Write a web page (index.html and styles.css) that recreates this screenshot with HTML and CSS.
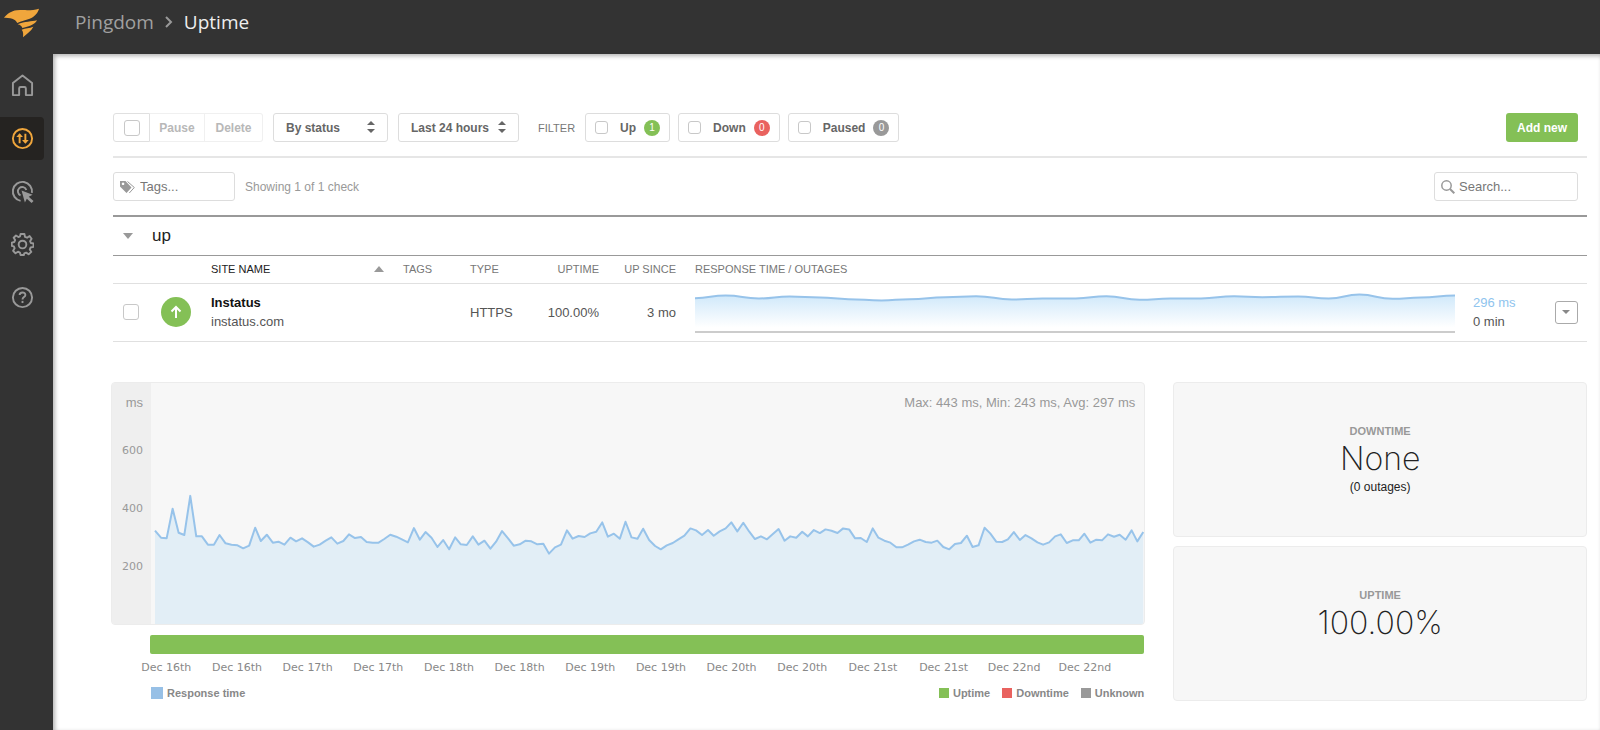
FILE: index.html
```html
<!DOCTYPE html>
<html lang="en">
<head>
    <meta charset="UTF-8">
    <meta name="viewport" content="width=device-width, initial-scale=1.0">
    <title>Pingdom - Uptime</title>
    <link rel="stylesheet" href="styles.css">
</head>
<body>
    <header class="topbar">
        <a href="#" class="logo" aria-label="Home">
            <svg width="44" height="44" viewBox="0 0 132 132" fill="#f0a63c">
                <path d="M12 53C22 42 33 33 50 31C76 29 96 33 117 26C114 38 104 50 89 56C77 61 63 62 52 69C49 61 38 52 12 53Z"/>
                <path d="M53 73C75 63 94 66 111 61C106 72 92 79 67 84C66 79 61 75 53 73Z"/>
                <path d="M65 89C77 84 88 85 100 80C94 93 81 101 69 112C70 102 70 95 65 89Z"/>
            </svg>
        </a>
        <nav class="breadcrumb">
            <a href="#">Pingdom</a>
            <svg width="8" height="12" viewBox="0 0 8 12" fill="none" stroke="#999" stroke-width="2"><path d="M1 1l5 5-5 5"/></svg>
            <a href="#" class="current">Uptime</a>
        </nav>
    </header>

    <div class="layout">
        <nav class="sidebar">
            <a href="#" aria-label="Dashboard">
                <svg width="24" height="24" viewBox="0 0 24 24" fill="none" stroke="currentColor" stroke-width="2" stroke-linejoin="round"><path d="M2 9.500L12 1.500l10 8V22h-6.500v-7q0-1.500-1.500-1.500h-4q-1.500 0-1.500 1.500v7H2z"/></svg>
            </a>
            <a href="#" class="active" aria-label="Uptime">
                <svg width="24" height="24" viewBox="0 0 24 24" fill="none" stroke="currentColor" stroke-width="2"><circle cx="12" cy="12" r="10"/><path d="M9 17V8M15 7v9"/><path fill="currentColor" stroke="none" d="M5.500 10.500l3.500-4 3.500 4zM11.500 13.500l3.500 4 3.500-4z"/></svg>
            </a>
            <a href="#" aria-label="Transactions">
                <svg width="24" height="24" viewBox="0 0 24 24" fill="none" stroke="currentColor" stroke-width="2"><path d="M10 21.800A10 10 0 1 1 21.800 13.500"/><path d="M10 16A4.500 4.500 0 1 1 16 10.500"/><path fill="currentColor" stroke="none" d="M11 11l11.500 4.500-4 2 5 4.500-2 2-5-4.500-2 4z"/></svg>
            </a>
            <a href="#" aria-label="Settings">
                <svg width="24" height="24" viewBox="0 0 24 24" fill="none" stroke="currentColor" stroke-width="2" stroke-linejoin="round"><circle cx="12" cy="12" r="4"/><path d="M10 1h4l.6 3 2.200.9L19.400 3.200 21.500 6l-1.600 2.500.9 2 2.700.5v3.500l-3 .6-.9 2 1.600 2.600-2.800 2.500-2.600-1.700-2 .8L13.500 23h-3.500l-.7-2.600-2-.9-2.600 1.700L2.200 18.500l1.600-2.500-.8-2L.8 13.500V10l2.600-.6.9-2L2.800 5 5.200 2.600l2.500 1.600 1.700-.7z"/></svg>
            </a>
            <a href="#" aria-label="Help">
                <svg width="24" height="24" viewBox="0 0 24 24" fill="none" stroke="currentColor" stroke-width="2"><circle cx="12" cy="12" r="10"/><path d="M9 9.500C9 5.800 15 5.800 15 9.300c0 2.200-3 2.300-3 4.700"/><path d="M12 15.500v2.300"/></svg>
            </a>
        </nav>

        <main class="content">
            <div class="toolbar">
                <div class="bulk">
                    <label class="bulk-check"><input type="checkbox" aria-label="Select all"></label>
                    <button type="button">Pause</button>
                    <button type="button">Delete</button>
                </div>
                <div class="select">
                    <select class="by-status" aria-label="Sort by"><option>By status</option></select>
                    <svg width="8" height="12" viewBox="0 0 8 12" fill="#666"><path d="M0 4l4-4 4 4zM0 8l4 4 4-4z"/></svg>
                </div>
                <div class="select">
                    <select class="period" aria-label="Period"><option>Last 24 hours</option></select>
                    <svg width="8" height="12" viewBox="0 0 8 12" fill="#666"><path d="M0 4l4-4 4 4zM0 8l4 4 4-4z"/></svg>
                </div>
                <span class="filter-title">FILTER</span>
                <div class="filters">
                    <label class="filter"><input type="checkbox">Up <span class="badge green">1</span></label>
                    <label class="filter"><input type="checkbox">Down <span class="badge red">0</span></label>
                    <label class="filter"><input type="checkbox">Paused <span class="badge gray">0</span></label>
                </div>
                <button type="button" class="add-new">Add new</button>
            </div>

            <div class="searchbar">
                <label class="field tags">
                    <svg width="16" height="14" viewBox="0 0 16 14" fill="#999"><path fill-rule="evenodd" d="M0 1h5.500l6 6.500L6.500 13 0 6.500zM3 2.500a1.300 1.300 0 1 0 .1 0z"/><path d="M7.500 1.500l6.800 6-5 5.500" fill="none" stroke="#999"/></svg>
                    <input type="text" placeholder="Tags..." aria-label="Tags">
                </label>
                <span class="showing">Showing 1 of 1 check</span>
                <label class="field search">
                    <svg width="14" height="14" viewBox="0 0 14 14" fill="none" stroke="#999"><circle cx="5.500" cy="5.500" r="4.700" stroke-width="1.500"/><path d="M9 9l4.300 4.300" stroke-width="2"/></svg>
                    <input type="text" placeholder="Search..." aria-label="Search">
                </label>
            </div>

            <section>
                <h2 class="group">
                    <svg width="10" height="6" viewBox="0 0 10 6" fill="#999"><path d="M0 0h10L5 6z"/></svg>
                    up
                </h2>
                <table class="checks">
                    <colgroup>
                        <col class="c-check"><col class="c-icon"><col class="c-name"><col class="c-tags"><col class="c-type"><col class="c-uptime"><col class="c-since"><col><col class="c-times"><col class="c-menu">
                    </colgroup>
                    <thead>
                        <tr>
                            <th></th>
                            <th></th>
                            <th class="sorted"><span>SITE NAME <svg width="10" height="6" viewBox="0 0 10 6" fill="#999"><path d="M0 6h10L5 0z"/></svg></span></th>
                            <th>TAGS</th>
                            <th>TYPE</th>
                            <th class="right">UPTIME</th>
                            <th class="right">UP SINCE</th>
                            <th class="response" colspan="3">RESPONSE TIME / OUTAGES</th>
                        </tr>
                    </thead>
                    <tbody>
                        <tr>
                            <td class="check"><input type="checkbox" aria-label="Select Instatus"></td>
                            <td>
                                <svg class="state" width="30" height="30" viewBox="0 0 30 30"><circle cx="15" cy="15" r="15" fill="#84c056"/><path d="M15 21V11M10.500 14.500L15 10l4.500 4.500" fill="none" stroke="#fff" stroke-width="2"/></svg>
                            </td>
                            <td><strong>Instatus</strong><br>instatus.com</td>
                            <td></td>
                            <td>HTTPS</td>
                            <td class="right">100.00%</td>
                            <td class="right">3 mo</td>
                            <td class="response">
                                <svg class="spark" viewBox="0 0 1487 123" preserveAspectRatio="none">
                                    <defs>
                                        <linearGradient id="fade" x1="0" y1="0" x2="0" y2="1">
                                            <stop offset="0" stop-color="#cfe8fa"/>
                                            <stop offset="0.900" stop-color="#fff"/>
                                        </linearGradient>
                                    </defs>
                                    <path id="sparkArea" fill="url(#fade)"/>
                                    <path id="sparkLine" class="line"/>
                                </svg>
                            </td>
                            <td class="times"><span>296 ms</span><br>0 min</td>
                            <td>
                                <button type="button" class="menu" aria-label="Actions"><svg width="8" height="4" viewBox="0 0 8 4" fill="#888"><path d="M0 0h8L4 4z"/></svg></button>
                            </td>
                        </tr>
                    </tbody>
                </table>
            </section>

            <section class="report">
                <div class="chart">
                    <div class="panel">
                        <div class="axis"><span>ms</span><span>600</span><span>400</span><span>200</span></div>
                        <div class="plot">
                            <p class="stats">Max: 443 ms, Min: 243 ms, Avg: 297 ms</p>
                            <svg viewBox="0 0 2985 726" preserveAspectRatio="none">
                                <path id="chartArea" fill="#e2eef6"/>
                                <path id="chartLine" class="line"/>
                            </svg>
                        </div>
                    </div>
                    <div class="uptime-bar"></div>
                    <div class="dates">
                        <span>Dec 16th</span><span>Dec 16th</span><span>Dec 17th</span><span>Dec 17th</span><span>Dec 18th</span><span>Dec 18th</span><span>Dec 19th</span><span>Dec 19th</span><span>Dec 20th</span><span>Dec 20th</span><span>Dec 21st</span><span>Dec 21st</span><span>Dec 22nd</span><span>Dec 22nd</span>
                    </div>
                    <div class="legend">
                        <span class="key blue">Response time</span>
                        <span class="key green first">Uptime</span>
                        <span class="key red">Downtime</span>
                        <span class="key gray">Unknown</span>
                    </div>
                </div>
                <div class="cards">
                    <div class="card">
                        <h3>DOWNTIME</h3>
                        <p class="value">None</p>
                        <p class="note">(0 outages)</p>
                    </div>
                    <div class="card">
                        <h3>UPTIME</h3>
                        <p class="value">100.00%</p>
                    </div>
                </div>
            </section>
        </main>
    </div>

    <script>
        // Response time samples, as depth in the plot
        const samples = [
            154, 175, 177, 88, 160, 167, 49, 171, 171, 196, 196, 167, 192, 196, 198, 207, 199, 145, 185, 166,
            190, 187, 196, 175, 186, 177, 189, 202, 196, 184, 174, 193, 185, 165, 176, 173, 188, 190, 190, 179,
            166, 172, 180, 189, 146, 181, 158, 175, 203, 182, 210, 174, 195, 197, 171, 196, 184, 208, 187, 155,
            177, 199, 195, 184, 186, 195, 193, 223, 204, 196, 153, 178, 170, 173, 162, 157, 129, 172, 163, 178,
            127, 174, 178, 148, 182, 200, 210, 198, 191, 180, 169, 147, 153, 167, 152, 169, 156, 147, 129, 156,
            130, 157, 179, 171, 180, 165, 149, 184, 171, 175, 157, 171, 152, 161, 150, 154, 161, 147, 150, 177,
            176, 188, 147, 175, 184, 190, 204, 204, 196, 186, 181, 188, 190, 184, 203, 210, 194, 191, 169, 203,
            198, 145, 162, 187, 188, 180, 158, 182, 167, 177, 189, 196, 189, 171, 165, 191, 183, 183, 163, 190,
            181, 183, 165, 172, 166, 181, 153, 186, 158
        ];
        const left = 12;
        const step = (2982 - left) / (samples.length - 1);
        const line = "M" + samples.map((y, i) => Math.round(left + i * step) + " " + (y + 291)).join("L");
        document.getElementById("chartLine").setAttribute("d", line);
        document.getElementById("chartArea").setAttribute("d", line + "V726H" + left + "Z");

        // Small graph in the table row
        const spark = [
            [0, 22], [60, 14], [125, 23], [185, 17], [245, 20], [300, 25], [365, 29], [420, 25], [490, 19],
            [550, 16], [620, 26], [680, 23], [745, 23], [805, 16], [870, 27], [930, 23], [990, 23], [1055, 16],
            [1110, 19], [1180, 17], [1240, 23], [1300, 11], [1365, 24], [1420, 20], [1487, 14]
        ];
        let curve = "M0 22";
        for (let i = 1; i < spark.length; i++) {
            let [x0, y0] = spark[i - 1];
            let [x1, y1] = spark[i];
            let mid = (x0 + x1) / 2;
            curve += `C${mid} ${y0} ${mid} ${y1} ${x1} ${y1}`;
        }
        document.getElementById("sparkLine").setAttribute("d", curve);
        document.getElementById("sparkArea").setAttribute("d", curve + "V123H0Z");
    </script>
</body>
</html>
```
FILE: styles.css
```css
* {
    box-sizing: border-box;
}
body {
    margin: 0;
    background: #333;
    color: #555;
    font-family: "Liberation Sans", Arial, sans-serif;
    font-size: 13px;
}
a {
    text-decoration: none;
}
p, h2, h3 {
    margin: 0;
}
button, select, input {
    font-family: inherit;
}

/* Top bar */
.topbar {
    display: flex;
    height: 54px;
    background: #333;
}
.logo {
    width: 53px;
}
.breadcrumb {
    display: flex;
    align-items: center;
    gap: 11px;
    height: 44px;
    padding-left: 22px;
    font-family: "Open Sans", sans-serif;
    font-size: 19px;
}
.breadcrumb a {
    color: #a0a0a0;
}
.breadcrumb .current {
    color: #eee;
}

/* Sidebar */
.layout {
    display: flex;
    min-height: calc(100vh - 54px);
}
.sidebar {
    display: flex;
    flex-direction: column;
    flex: none;
    gap: 10px;
    width: 53px;
    padding-top: 10px;
}
.sidebar a {
    display: flex;
    align-items: center;
    justify-content: center;
    width: 44px;
    height: 43px;
    color: #999;
    border-radius: 0 4px 4px 0;
}
.sidebar svg {
    width: 23px;
    height: 23px;
}
.sidebar .active {
    background: #252321;
    color: #f0a63c;
}

.content {
    flex: 1;
    min-width: 0;
    padding: 59px 13px 29px 60px;
    background: #fff;
    box-shadow: inset 2px 2px 4px rgba(0, 0, 0, 0.3);
}

/* Toolbar */
input[type="checkbox"] {
    appearance: none;
    width: 13px;
    height: 13px;
    margin: 0;
    background: #fff;
    border: 1px solid #c8c8c8;
    border-radius: 3px;
}
.toolbar {
    display: flex;
    align-items: center;
    gap: 10px;
    padding: 0 9px 14px 0;
    border-bottom: 2px solid #e6e6e6;
}
.bulk {
    display: flex;
    height: 29px;
}
.bulk-check {
    display: flex;
    align-items: center;
    justify-content: center;
    width: 37px;
    border: 1px solid #e0e0e0;
    border-radius: 3px 0 0 3px;
}
.bulk-check input[type="checkbox"] {
    width: 16px;
    height: 16px;
}
.bulk button {
    width: 55px;
    padding: 0;
    background: #fff;
    border: 1px solid #f0f0f0;
    border-left: none;
    color: #b8b8b8;
    font-size: 12px;
    font-weight: bold;
}
.bulk button:last-child {
    width: 58px;
    border-radius: 0 3px 3px 0;
}
.select {
    position: relative;
}
.select select {
    display: block;
    appearance: none;
    height: 29px;
    padding: 0 12px;
    background: #fff;
    border: 1px solid #ddd;
    border-radius: 3px;
    color: #666;
    font-size: 12px;
    font-weight: bold;
}
.select .by-status {
    width: 115px;
}
.select .period {
    width: 121px;
}
.select svg {
    position: absolute;
    right: 13px;
    top: 8px;
    pointer-events: none;
}
.filter-title {
    padding-left: 9px;
    font-size: 11px;
    color: #777;
}
.filters {
    display: flex;
    gap: 8px;
}
.filter {
    display: flex;
    align-items: center;
    height: 29px;
    padding: 0 9px;
    border: 1px solid #ddd;
    border-radius: 3px;
    color: #666;
    font-size: 12px;
    font-weight: bold;
}
.filter input[type="checkbox"] {
    margin-right: 12px;
}
.badge {
    width: 16px;
    height: 16px;
    margin-left: 8px;
    border-radius: 8px;
    color: #fff;
    font-size: 10px;
    font-weight: normal;
    line-height: 16px;
    text-align: center;
}
.green { background: #84c056; }
.red { background: #e9625f; }
.gray { background: #999; }
.add-new {
    width: 72px;
    height: 29px;
    margin-left: auto;
    padding: 0;
    background: #84c056;
    border: none;
    border-radius: 3px;
    color: #fff;
    font-size: 12px;
    font-weight: bold;
}

/* Tags and search */
.searchbar {
    display: flex;
    align-items: center;
    gap: 10px;
    padding: 14px 9px 14px 0;
    border-bottom: 2px solid #999;
}
.field {
    display: flex;
    align-items: center;
    gap: 4px;
    width: 122px;
    height: 29px;
    padding: 0 6px;
    border: 1px solid #ddd;
    border-radius: 3px;
}
.field svg {
    flex: none;
}
.field input {
    width: 100%;
    min-width: 0;
    padding: 0;
    border: none;
    outline: none;
    background: none;
    font-size: 13px;
}
.field input::placeholder {
    color: #777;
}
.showing {
    color: #999;
    font-size: 12px;
}
.search {
    width: 144px;
    margin-left: auto;
}

/* Checks table */
.group {
    display: flex;
    align-items: center;
    gap: 19px;
    height: 39px;
    padding-left: 10px;
    border-bottom: 1px solid #999;
    color: #222;
    font-size: 17px;
    font-weight: normal;
}
.checks {
    width: 100%;
    table-layout: fixed;
    border-collapse: collapse;
}
.c-check { width: 48px; }
.c-icon { width: 50px; }
.c-name { width: 192px; }
.c-tags { width: 67px; }
.c-type { width: 58px; }
.c-uptime { width: 71px; }
.c-since { width: 77px; }
.c-times { width: 100px; }
.c-menu { width: 32px; }
.checks th, .checks td {
    padding: 0;
    text-align: left;
    border-bottom: 1px solid #e0e0e0;
}
.checks th {
    height: 27px;
    color: #777;
    font-size: 11px;
    font-weight: normal;
}
.checks td {
    height: 58px;
    line-height: 19px;
}
.checks .sorted {
    color: #222;
}
.sorted span {
    display: flex;
    align-items: center;
    justify-content: space-between;
    padding-right: 19px;
}
.checks .right {
    text-align: right;
}
.checks .response {
    padding-left: 19px;
}
.checks .check {
    padding-left: 10px;
}
.checks td svg, .checks td input {
    display: block;
}
.checks td input[type="checkbox"] {
    width: 16px;
    height: 16px;
}
.checks strong {
    color: #111;
}
.checks .times {
    padding-left: 18px;
}
.times span {
    color: #8fc4ee;
}
.spark {
    width: 100%;
    height: 42px;
    border-bottom: 2px solid #ccc;
}
.line {
    fill: none;
    stroke: #97c3ea;
    stroke-width: 2px;
    stroke-linejoin: round;
    vector-effect: non-scaling-stroke;
}
.menu {
    display: flex;
    align-items: center;
    justify-content: center;
    width: 23px;
    height: 23px;
    padding: 0;
    background: #fff;
    border: 1px solid #aaa;
    border-radius: 3px;
}

/* Report */
.report {
    display: grid;
    grid-template-columns: 5fr 2fr;
    gap: 28px;
    margin: 40px 0 0 -2px;
}
.panel {
    display: flex;
    height: 243px;
    border: 1px solid #ececec;
    border-radius: 4px;
    background: #f7f7f7;
    overflow: hidden;
}
.axis {
    display: flex;
    flex-direction: column;
    width: 39px;
    padding: 12px 8px 0 0;
    background: #efefef;
    color: #999;
    font-family: "DejaVu Sans", sans-serif;
    font-size: 11px;
    line-height: 16px;
    text-align: right;
}
.axis span + span {
    margin-top: 42px;
}
.axis span:first-child {
    font-family: "Liberation Sans", Arial, sans-serif;
    font-size: 13px;
    margin-bottom: -10px;
}
.plot {
    position: relative;
    flex: 1;
}
.plot svg {
    display: block;
    width: 100%;
    height: 100%;
}
.stats {
    position: absolute;
    top: 12px;
    right: 9px;
    color: #999;
    line-height: 16px;
}
.uptime-bar {
    height: 19px;
    margin: 10px 1px 0 39px;
    background: #84c056;
    border-radius: 2px;
}
.dates {
    display: flex;
    padding: 6px 25px 0 20px;
    color: #888;
    font-family: "DejaVu Sans", sans-serif;
    font-size: 11px;
    line-height: 16px;
}
.dates span {
    flex: 1;
    text-align: center;
    white-space: nowrap;
}
.legend {
    display: flex;
    gap: 12px;
    margin: 9px 1px 0 40px;
    color: #888;
    font-size: 11px;
    font-weight: bold;
    line-height: 16px;
}
.key {
    display: flex;
    align-items: center;
    gap: 4px;
    background: none;
}
.key::before {
    content: "";
    width: 10px;
    height: 10px;
}
.key.first {
    margin-left: auto;
}
.key.blue::before {
    width: 12px;
    height: 12px;
    background: #97c0e6;
}
.key.green::before { background: #84c056; }
.key.red::before { background: #e9625f; }
.key.gray::before { background: #999; }
.cards {
    display: grid;
    grid-template-rows: 1fr 1fr;
    gap: 9px;
}
.card {
    padding-top: 40px;
    background: #f7f7f7;
    border: 1px solid #ececec;
    border-radius: 4px;
    text-align: center;
}
.card h3 {
    color: #999;
    font-size: 11px;
    line-height: 16px;
}
.card .value {
    color: #222;
    font-family: Inter, sans-serif;
    font-size: 32px;
    font-weight: 200;
    line-height: 40px;
}
.card .note {
    color: #222;
    font-size: 12px;
    line-height: 16px;
}
```
